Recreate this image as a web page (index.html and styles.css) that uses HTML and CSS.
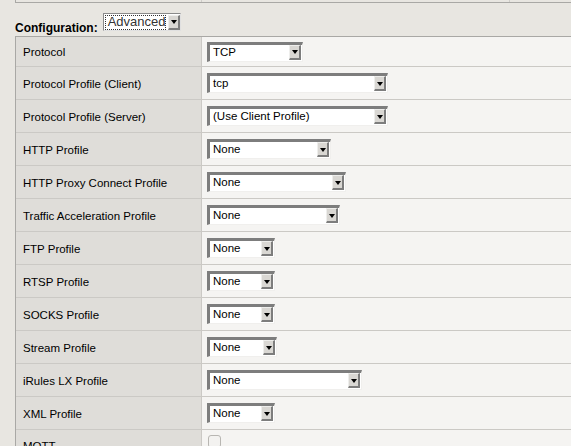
FILE: index.html
```html
<!DOCTYPE html>
<html>
<head>
<meta charset="utf-8">
<link rel="stylesheet" href="styles.css">
</head>
<body>
<div class="prev">
  <div class="prev-a"></div>
  <div class="prev-b"></div>
  <div class="prev-c"></div>
</div>
<div class="config-bar">
  <span class="config-label">Configuration:</span>
  <span class="adv-select"><span class="adv-text">Advanced</span><span class="btn"><span class="tri"></span></span></span>
</div>
<div class="table">
  <div class="row first"><div class="lab">Protocol</div><div class="val"><span class="sel w96"><span class="txt">TCP</span><span class="btn"><span class="tri"></span></span></span></div></div>
  <div class="row"><div class="lab">Protocol Profile (Client)</div><div class="val"><span class="sel w181"><span class="txt">tcp</span><span class="btn"><span class="tri"></span></span></span></div></div>
  <div class="row"><div class="lab">Protocol Profile (Server)</div><div class="val"><span class="sel w181"><span class="txt">(Use Client Profile)</span><span class="btn"><span class="tri"></span></span></span></div></div>
  <div class="row"><div class="lab">HTTP Profile</div><div class="val"><span class="sel w124"><span class="txt">None</span><span class="btn"><span class="tri"></span></span></span></div></div>
  <div class="row"><div class="lab">HTTP Proxy Connect Profile</div><div class="val"><span class="sel w139"><span class="txt">None</span><span class="btn"><span class="tri"></span></span></span></div></div>
  <div class="row"><div class="lab">Traffic Acceleration Profile</div><div class="val"><span class="sel w133"><span class="txt">None</span><span class="btn"><span class="tri"></span></span></span></div></div>
  <div class="row"><div class="lab">FTP Profile</div><div class="val"><span class="sel w68"><span class="txt">None</span><span class="btn"><span class="tri"></span></span></span></div></div>
  <div class="row"><div class="lab">RTSP Profile</div><div class="val"><span class="sel w68"><span class="txt">None</span><span class="btn"><span class="tri"></span></span></span></div></div>
  <div class="row"><div class="lab">SOCKS Profile</div><div class="val"><span class="sel w68"><span class="txt">None</span><span class="btn"><span class="tri"></span></span></span></div></div>
  <div class="row"><div class="lab">Stream Profile</div><div class="val"><span class="sel w70"><span class="txt">None</span><span class="btn"><span class="tri"></span></span></span></div></div>
  <div class="row"><div class="lab">iRules LX Profile</div><div class="val"><span class="sel w155"><span class="txt">None</span><span class="btn"><span class="tri"></span></span></span></div></div>
  <div class="row"><div class="lab">XML Profile</div><div class="val"><span class="sel w68"><span class="txt">None</span><span class="btn"><span class="tri"></span></span></span></div></div>
  <div class="row"><div class="lab top">MQTT</div><div class="val top"><span class="chk"></span></div></div>
</div>
</body>
</html>
```
FILE: styles.css
```css
html, body {
  margin: 0;
  padding: 0;
  background: #e8e6e1;
  font-family: "Liberation Sans", Arial, sans-serif;
  font-size: 11.5px;
  color: #000;
  overflow: hidden;
}

.prev {
  display: flex;
  margin-left: 15px;
  height: 2px;
  border-bottom: 1px solid #a9a8a5;
}
.prev-a {
  width: 185px;
  border-left: 1px solid #a9a8a5;
}
.prev-b {
  width: 307px;
  border-left: 1px solid #cfcdc9;
}
.prev-c {
  flex: 1;
  border-left: 1px solid #cfcdc9;
}

.config-bar {
  height: 33px;
  display: flex;
  align-items: center;
  padding-left: 15px;
  gap: 5px;
}
.config-label {
  font-weight: bold;
  font-size: 12px;
  margin-top: 17px;
}

.adv-select {
  display: flex;
  width: 75px;
  height: 15px;
  border: 1px solid #8a8a8a;
  border-right-color: #e0e0e0;
  border-bottom-color: #e0e0e0;
  background: #fff;
  padding: 1px 0 0 1px;
  margin-top: 4px;
}
.adv-text {
  flex: 1;
  border: 1px dotted #333;
  line-height: 12px;
  font-size: 13px;
  padding-left: 2px;
  color: #333;
  margin-right: 2px;
}

.table {
  margin-left: 15px;
  border-top: 1px solid #a9a8a5;
  border-left: 1px solid #a9a8a5;
}
.row {
  display: flex;
  height: 32px;
  border-bottom: 1px solid #cbc9c5;
}
.row.first {
  height: 29px;
}
.lab {
  background: #dfddd9;
  border-right: 1px solid #cbc9c5;
  display: flex;
  align-items: center;
  padding-left: 7px;
  box-sizing: border-box;
  width: 186px;
  padding-top: 1px;
}
.val {
  flex: 1;
  background: #f5f4f2;
  display: flex;
  align-items: center;
  padding-left: 5px;
}
.lab.top {
  align-items: flex-start;
  padding-top: 10px;
}
.val.top {
  align-items: flex-start;
}

.sel {
  display: flex;
  box-sizing: border-box;
  height: 20px;
  background: #fff;
  border-top: 3px solid #7d7d7d;
  border-left: 3px solid #7d7d7d;
  border-right: 1px solid #f0efed;
  border-bottom: 1px solid #f0efed;
  padding: 0 1px 1px 0;
}
.sel .txt {
  flex: 1;
  padding-left: 3px;
  line-height: 15px;
  white-space: nowrap;
  overflow: hidden;
}
.btn {
  width: 12px;
  box-sizing: border-box;
  background: #d9d7d3;
  border-top: 1px solid #eeeeec;
  border-left: 1px solid #eeeeec;
  border-right: 2px solid #7d7d7d;
  border-bottom: 2px solid #7d7d7d;
  display: flex;
  align-items: center;
  justify-content: center;
}
.tri {
  width: 0;
  height: 0;
  border-left: 3px solid transparent;
  border-right: 3px solid transparent;
  border-top: 4px solid #000;
  margin-top: 1px;
}

.w96 { width: 96px; }
.w181 { width: 181px; }
.w124 { width: 124px; }
.w139 { width: 139px; }
.w133 { width: 133px; }
.w68 { width: 68px; }
.w70 { width: 70px; }
.w155 { width: 155px; }

.chk {
  display: inline-block;
  width: 11px;
  height: 11px;
  border: 1px solid #b8b6b2;
  border-radius: 3px;
  background: #f3f2f0;
  margin-left: 1px;
  margin-top: 5px;
}
```
